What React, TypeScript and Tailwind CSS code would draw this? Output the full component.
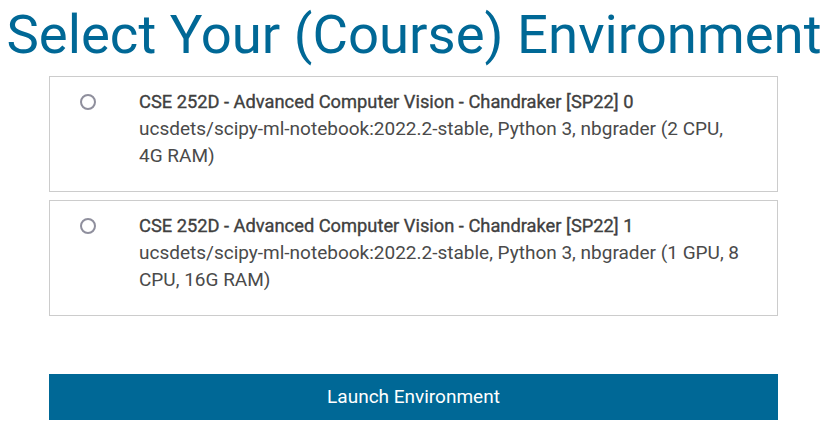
import { useState } from 'react';

const options = [
  {
    id: 'opt0',
    title: 'CSE 252D - Advanced Computer Vision - Chandraker [SP22] 0',
    desc: 'ucsdets/scipy-ml-notebook:2022.2-stable, Python 3, nbgrader (2 CPU, 4G RAM)',
  },
  {
    id: 'opt1',
    title: 'CSE 252D - Advanced Computer Vision - Chandraker [SP22] 1',
    desc: 'ucsdets/scipy-ml-notebook:2022.2-stable, Python 3, nbgrader (1 GPU, 8 CPU, 16G RAM)',
  },
];

export default function App() {
  const [selected, setSelected] = useState<string | null>(null);

  return (
    <div className="min-h-screen bg-white font-['Roboto',sans-serif]">
      <h1 className="whitespace-nowrap pr-[6px] text-center text-[54.5px] leading-[68px] font-normal text-[#006896]">
        Select Your (Course) Environment
      </h1>
      <div className="ml-[49px] mt-[8px] flex w-[729px] flex-col gap-[8px]">
        {options.map((opt) => (
          <label
            key={opt.id}
            className="flex h-[116px] cursor-pointer border border-[#cccccc] pt-[11px] pr-[36px]"
          >
            <div className="w-[89px] shrink-0 pt-[6px] pl-[30px]">
              <input
                type="radio"
                name="env"
                checked={selected === opt.id}
                onChange={() => setSelected(opt.id)}
                className="block h-[16px] w-[16px] appearance-none rounded-full border-2 border-[#8f8f9d] checked:border-[5px] checked:border-[#006896]"
              />
            </div>
            <div className="text-[19px] leading-[27px] text-[#4a4a4a]">
              <div className="text-[18.3px] font-normal text-[#404040] [-webkit-text-stroke:0.35px_#404040]">{opt.title}</div>
              <div>{opt.desc}</div>
            </div>
          </label>
        ))}
      </div>
      <div className="ml-[49px] mt-[58px] w-[729px]">
        <button className="h-[46px] w-full bg-[#006896] text-[19px] text-white">
          Launch Environment
        </button>
      </div>
    </div>
  );
}
